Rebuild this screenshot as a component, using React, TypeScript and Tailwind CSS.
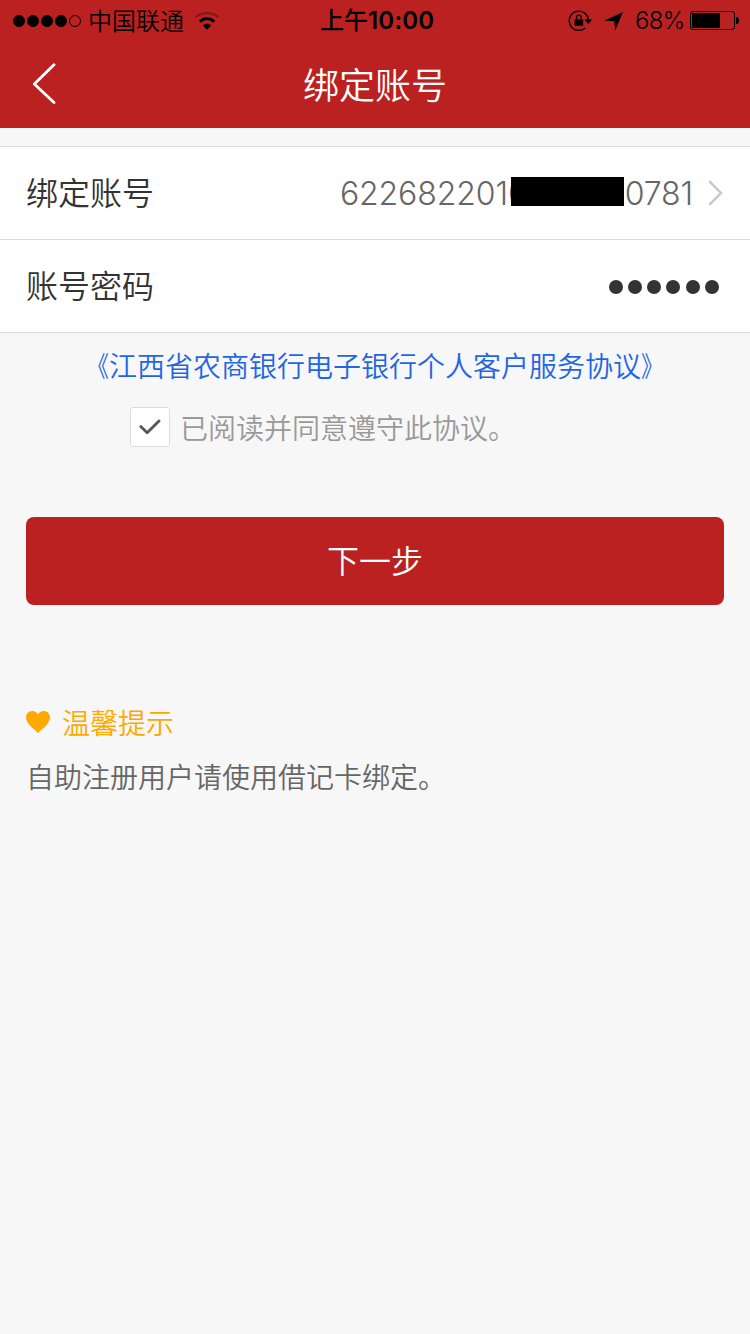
import React from 'react';

const SignalDots: React.FC = () => (
    <div className="flex gap-[2px]">
        {[true, true, true, true, false].map((filled, i) => (
            <span key={i} className={`w-3 h-3 rounded-full border border-black ${filled ? 'bg-black' : ''}`}></span>
        ))}
    </div>
);

const WifiIcon: React.FC = () => (
    <svg width="24" height="18" viewBox="0 0 24 18" fill="none" className="ml-[11px]">
        <path d="M.6 5.2C7-.2 17-.2 23.4 5.2" stroke="#861719" strokeWidth="2.4" />
        <path d="M4.7 9.6C9 5.6 15 5.6 19.3 9.6" stroke="#000" strokeWidth="2.8" />
        <path d="M12 17.8L7.9 13.5C10.2 11.2 13.8 11.2 16.1 13.5Z" fill="#000" />
    </svg>
);

const RotationLockIcon: React.FC = () => (
    <svg width="24" height="22" viewBox="0 0 24 22" fill="none" stroke="#000">
        <path d="M20.4 9.5A9.6 9.6 0 1 0 17.2 18" strokeWidth="1.4" />
        <path d="M16.6 9.5H24L20.3 14Z" fill="#000" stroke="none" />
        <rect x="6.6" y="9.4" width="8.6" height="6.4" rx=".6" fill="#000" stroke="none" />
        <path d="M8.6 10V7.4a2.3 2.3 0 0 1 4.6 0V10" strokeWidth="1.4" />
    </svg>
);

const StatusBar: React.FC = () => (
    <div className="grid grid-cols-[320px_115px_1fr] items-center h-10 pt-[1px] text-2xl leading-8 text-black">
        <div className="flex items-center pl-[13px]">
            <SignalDots />
            <span className="ml-[7px] pt-[2px]">中国联通</span>
            <WifiIcon />
        </div>
        <div className="font-semibold whitespace-nowrap pt-[1px]">
            <span className="font-medium">上午</span><span className="tracking-[0.2px]">10:00</span>
        </div>
        <div className="flex items-center justify-end pr-[11px]">
            <RotationLockIcon />
            <svg width="20" height="20" viewBox="0 0 20 20" className="ml-3">
                <path d="M19 1L11.2 19.5L10.3 10.3L0 9.7Z" fill="#000" />
            </svg>
            <span className="ml-[11px] w-[55px] pt-[1px] tracking-[-0.7px]">68%</span>
            <div className="w-[45px] h-[19px] rounded-[3px] border border-black p-[1px]">
                <div className="h-full bg-black rounded-[1px] w-[28px]"></div>
            </div>
            <div className="ml-[1px] w-[3px] h-[7px] bg-black rounded-r-full"></div>
        </div>
    </div>
);

const Header: React.FC = () => (
    <header className="h-32 bg-[#bc2121]">
        <StatusBar />
        <div className="grid grid-cols-[100px_1fr_100px] items-center h-[88px]">
            <button className="pl-8">
                <svg width="24" height="42" viewBox="0 0 24 42" fill="none" stroke="#fff" strokeWidth="2.8" strokeLinecap="round" strokeLinejoin="round">
                    <path d="M22 1.8L2.3 21L22 39.5" />
                </svg>
            </button>
            <h1 className="pt-[4px] text-center text-4xl text-white">绑定账号</h1>
        </div>
    </header>
);

interface FormRowProps {
    label: string;
    children: React.ReactNode;
}

const FormRow: React.FC<FormRowProps> = ({ label, children }) => (
    <div className="flex items-center justify-between h-[93px] pl-[26px] border-b border-[#dcdcdc] text-[32px] text-[#333]">
        <span className="pt-[2px]">{label}</span>
        {children}
    </div>
);

const App: React.FC = () => {
    return (
        <div className="w-[750px] h-[1334px] bg-[#f7f7f7] font-['Inter','Noto_Sans_CJK_SC',sans-serif] font-[350] overflow-hidden">
            <Header />

            <div className="mt-[18px] bg-white border-t border-[#dcdcdc]">
                <FormRow label="绑定账号">
                    <div className="flex items-center pr-[27px] text-[#666]">
                        <span className="pt-[1px] tracking-[-0.1px]">6226822010</span>
                        <span className="relative -ml-[17px] mr-[1px] w-[113px] h-[29px] -mt-[3px] bg-black"></span>
                        <span className="pt-[1px] tracking-[-0.1px]">0781</span>
                        <svg width="15" height="26" viewBox="0 0 15 26" fill="none" stroke="#c7c7cc" strokeWidth="2.4" className="ml-[15px]">
                            <path d="M1.2 1.2L13 13L1.2 24.8" />
                        </svg>
                    </div>
                </FormRow>
                <FormRow label="账号密码">
                    <div className="flex gap-[5.3px] pt-[2px] pr-[31px]">
                        {Array.from({ length: 6 }, (_, i) => (
                            <span key={i} className="w-[14px] h-[14px] rounded-full bg-[#333]"></span>
                        ))}
                    </div>
                </FormRow>
            </div>

            <div className="mt-[14px] text-center text-[28px] leading-10 text-[#1f66e5]">
                <span className="inline-block origin-right scale-x-[0.8]">《</span>江西省农商银行电子银行个人客户服务协议<span className="inline-block origin-left scale-x-[0.8]">》</span>
            </div>
            <label className="flex items-center mt-[20px] ml-[130px] text-[28px] leading-10 text-[#999]">
                <span className="flex items-center justify-center w-10 h-10 bg-white border border-[#ddd] rounded-[3px]">
                    <svg width="22" height="16" viewBox="0 0 22 16" fill="none" stroke="#555" strokeWidth="2.8" strokeLinecap="round" strokeLinejoin="round">
                        <path d="M1.8 7.6L8.2 13.8L20 2" />
                    </svg>
                </span>
                <span className="ml-[10px] h-10 pt-[2px]">已阅读并同意遵守此协议。</span>
            </label>

            <button className="block mx-[26px] mt-[70px] w-[698px] h-[88px] pt-[2px] rounded-lg bg-[#bc2121] text-[32px] text-white">
                下一步
            </button>

            <div className="mt-[97px] px-[26px] text-[28px] leading-10">
                <div className="flex items-center text-[#ffa800]">
                    <svg width="24" height="22" viewBox="0 0 24 22" fill="currentColor">
                        <path d="M12 22C9.5 19.6 0 12.8 0 6.6C0 2.8 2.9 0 6.4 0C8.8 0 10.9 1.3 12 3.3C13.1 1.3 15.2 0 17.6 0C21.1 0 24 2.8 24 6.6C24 12.8 14.5 19.6 12 22Z" />
                    </svg>
                    <span className="ml-3 h-10 pt-[2px]">温馨提示</span>
                </div>
                <p className="mt-[16px] text-[#666]">自助注册用户请使用借记卡绑定。</p>
            </div>
        </div>
    );
};

export default App;
